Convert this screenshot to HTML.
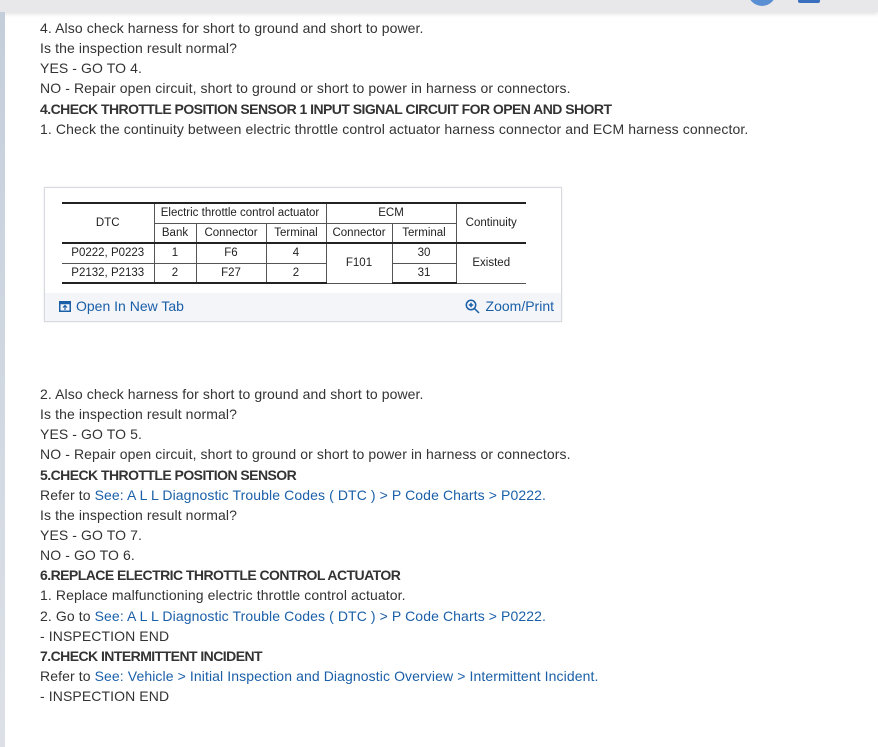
<!DOCTYPE html>
<html><head><meta charset="utf-8"><style>
*{margin:0;padding:0;box-sizing:border-box}
body{width:878px;height:747px;background:#fff;font-family:"Liberation Sans",sans-serif;color:#333;position:relative;overflow:hidden}
.top{position:absolute;left:0;top:0;width:878px;height:12px;background:#e8e8ea;box-shadow:0 2px 4px rgba(0,0,0,.12)}
.circ{position:absolute;left:748px;top:-22px;width:28px;height:28px;border-radius:50%;background:#5b8fd3}
.ic{position:absolute;left:798px;top:-4px;width:22px;height:7px;background:#3a6fc0;border-radius:2px}
.side{position:absolute;left:0;top:12px;width:5px;height:735px;background:linear-gradient(#c4cedb,#dde1e7)}
.t{position:absolute;left:40px;font-size:14px;line-height:20px;white-space:nowrap;letter-spacing:0.1px}
.t p{height:20.15px}
b{font-weight:bold;letter-spacing:-0.55px}
a{color:#1a5fa8;text-decoration:none}
.box{position:absolute;left:44px;top:187px;width:518px;height:135px;border:1px solid #d6d9de;background:#fff;box-shadow:0 0 2px rgba(0,0,0,.1)}
table{position:absolute;left:17px;top:14px;border-collapse:collapse;font-size:11.5px;color:#222;width:464px}
td{border:1px solid #555;text-align:center;height:20px;padding:0}
tr.h td{border-top:2px solid #222}
tr.last td{border-bottom:2px solid #222}
table td:first-child{border-left:none}
table td:last-child{border-right:none}
.foot{position:absolute;left:0;top:105px;width:516px;height:28px;background:#f3f5f8;font-size:14px;color:#1a5fa8}
</style></head><body>
<div class="top"></div><div class="circ"></div><div class="ic"></div><div class="side"></div>
<div class="t" style="top:18px">
<p>4. Also check harness for short to ground and short to power.</p>
<p>Is the inspection result normal?</p>
<p>YES - GO TO 4.</p>
<p>NO - Repair open circuit, short to ground or short to power in harness or connectors.</p>
<p><b>4.CHECK THROTTLE POSITION SENSOR 1 INPUT SIGNAL CIRCUIT FOR OPEN AND SHORT</b></p>
<p>1. Check the continuity between electric throttle control actuator harness connector and ECM harness connector.</p>
</div>
<div class="box">
<table>
<tr class="h"><td rowspan="2" style="width:92px">DTC</td><td colspan="3">Electric throttle control actuator</td><td colspan="2">ECM</td><td rowspan="2">Continuity</td></tr>
<tr><td style="width:42px">Bank</td><td style="width:70px">Connector</td><td style="width:60px">Terminal</td><td style="width:66px">Connector</td><td style="width:64px">Terminal</td></tr>
<tr class="h"><td>P0222, P0223</td><td>1</td><td>F6</td><td>4</td><td rowspan="2">F101</td><td>30</td><td rowspan="2">Existed</td></tr>
<tr class="last"><td>P2132, P2133</td><td>2</td><td>F27</td><td>2</td><td>31</td></tr>
</table>
<div class="foot">
<svg style="position:absolute;left:14px;top:8px" width="12" height="11" viewBox="0 0 12 11"><rect x="0.75" y="0.75" width="10.5" height="9.5" fill="none" stroke="#1a5fa8" stroke-width="1.5"/><rect x="0.75" y="0.75" width="10.5" height="2.5" fill="#1a5fa8"/><path d="M6 9V5M4 6.5L6 4.5 8 6.5" stroke="#1a5fa8" stroke-width="1.2" fill="none"/></svg>
<span style="position:absolute;left:31px;top:5px">Open In New Tab</span>
<svg style="position:absolute;left:420px;top:6px" width="15" height="15" viewBox="0 0 15 15"><circle cx="6" cy="6" r="4.7" fill="none" stroke="#1a5fa8" stroke-width="1.5"/><path d="M9.5 9.5L14 14M6 3.8v4.4M3.8 6h4.4" stroke="#1a5fa8" stroke-width="1.5"/></svg>
<span style="position:absolute;right:7px;top:5px">Zoom/Print</span></div>
</div>
<div class="t" style="top:384px">
<p>2. Also check harness for short to ground and short to power.</p>
<p>Is the inspection result normal?</p>
<p>YES - GO TO 5.</p>
<p>NO - Repair open circuit, short to ground or short to power in harness or connectors.</p>
<p><b>5.CHECK THROTTLE POSITION SENSOR</b></p>
<p>Refer to <a>See: A L L Diagnostic Trouble Codes ( DTC ) &gt; P Code Charts &gt; P0222.</a></p>
<p>Is the inspection result normal?</p>
<p>YES - GO TO 7.</p>
<p>NO - GO TO 6.</p>
<p><b>6.REPLACE ELECTRIC THROTTLE CONTROL ACTUATOR</b></p>
<p>1. Replace malfunctioning electric throttle control actuator.</p>
<p>2. Go to <a>See: A L L Diagnostic Trouble Codes ( DTC ) &gt; P Code Charts &gt; P0222.</a></p>
<p>- INSPECTION END</p>
<p><b>7.CHECK INTERMITTENT INCIDENT</b></p>
<p>Refer to <a>See: Vehicle &gt; Initial Inspection and Diagnostic Overview &gt; Intermittent Incident.</a></p>
<p>- INSPECTION END</p>
</div>
</body></html>
